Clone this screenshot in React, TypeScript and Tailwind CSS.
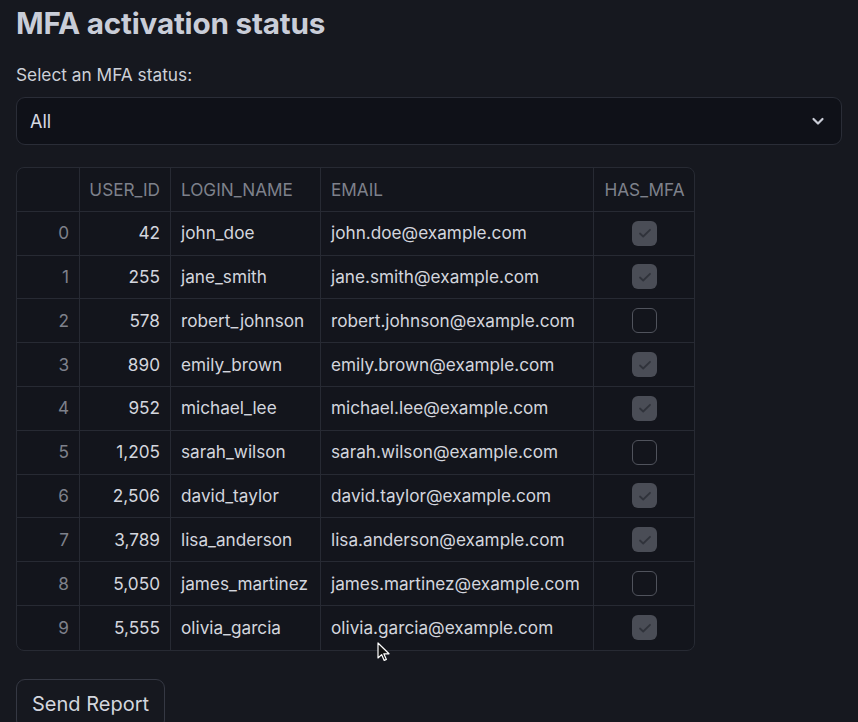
import React from "react";

type Row = {
  id: number;
  login: string;
  email: string;
  mfa: boolean;
};

const rows: Row[] = [
  { id: 42, login: "john_doe", email: "john.doe@example.com", mfa: true },
  { id: 255, login: "jane_smith", email: "jane.smith@example.com", mfa: true },
  { id: 578, login: "robert_johnson", email: "robert.johnson@example.com", mfa: false },
  { id: 890, login: "emily_brown", email: "emily.brown@example.com", mfa: true },
  { id: 952, login: "michael_lee", email: "michael.lee@example.com", mfa: true },
  { id: 1205, login: "sarah_wilson", email: "sarah.wilson@example.com", mfa: false },
  { id: 2506, login: "david_taylor", email: "david.taylor@example.com", mfa: true },
  { id: 3789, login: "lisa_anderson", email: "lisa.anderson@example.com", mfa: true },
  { id: 5050, login: "james_martinez", email: "james.martinez@example.com", mfa: false },
  { id: 5555, login: "olivia_garcia", email: "olivia.garcia@example.com", mfa: true },
];

function CheckCell({ checked }: { checked: boolean }) {
  if (!checked) {
    return <div className="w-[25px] h-[25px] rounded-[6px] border border-[#50535c]" />;
  }
  return (
    <div className="w-[25px] h-[25px] rounded-[6px] bg-[#4a4d56] flex items-center justify-center">
      <svg width="16" height="16" viewBox="0 0 16 16" fill="none">
        <path d="M3 8.5l3.2 3L13 4.8" stroke="#30333b" strokeWidth="1.8" strokeLinecap="round" strokeLinejoin="round" />
      </svg>
    </div>
  );
}

export default function App() {
  const cell = "h-[43.8px] border-r border-b border-[#272a33] px-[10px] flex items-center";
  return (
    <div
      className="relative w-[858px] h-[722px] overflow-hidden bg-[#16181f] px-4 text-[#d3d6de]"
      style={{ fontFamily: "Inter, 'Noto Sans', sans-serif" }}
    >
      <h1 className="pt-[5px] text-[29.7px] leading-[36px] font-bold text-[#c9cdd8] tracking-[-0.2px]">
        MFA activation status
      </h1>

      <div className="mt-[23px] text-[17.3px] leading-[22px] text-[#cdd0d8]">Select an MFA status:</div>

      <div className="mt-[11px] h-[48px] rounded-[9px] border border-[#2a2d37] bg-[#0f1118] flex items-center justify-between pl-[13px] pr-[16px]">
        <span className="text-[18px] text-[#d7dae2]">All</span>
        <svg width="14" height="14" viewBox="0 0 14 14" fill="none">
          <path d="M2.5 5l4.5 4.5L11.5 5" stroke="#c9ccd6" strokeWidth="2.2" strokeLinecap="round" strokeLinejoin="round" />
        </svg>
      </div>

      <div className="mt-[22px] w-[679px] rounded-[8px] border border-[#272a33] bg-[#13151c] overflow-hidden text-[17.2px]">
        <div className="grid grid-cols-[63px_91px_150px_273px_101px]">
          <div className={cell} />
          <div className={`${cell} justify-end text-[#7e818b]`}>USER_ID</div>
          <div className={`${cell} text-[#7e818b]`}>LOGIN_NAME</div>
          <div className={`${cell} text-[#7e818b]`}>EMAIL</div>
          <div className={`${cell} border-r-0 justify-center text-[#7e818b]`}>HAS_MFA</div>
          {rows.map((r, i) => {
            const last = i === rows.length - 1 ? " border-b-0" : "";
            return (
              <React.Fragment key={r.id}>
                <div className={`${cell}${last} justify-end text-[#7e818b]`}>{i}</div>
                <div className={`${cell}${last} justify-end`}>{r.id.toLocaleString("en-US")}</div>
                <div className={`${cell}${last}`}>{r.login}</div>
                <div className={`${cell}${last}`}>{r.email}</div>
                <div className={`${cell}${last} border-r-0 justify-center`}>
                  <CheckCell checked={r.mfa} />
                </div>
              </React.Fragment>
            );
          })}
        </div>
      </div>

      <button className="mt-[28px] h-[50px] px-[15px] rounded-[9px] border border-[#353843] bg-[#16181f] text-[20px] text-[#d3d6de]">
        Send Report
      </button>

      <svg className="absolute left-[377px] top-[642px]" width="14" height="20" viewBox="0 0 14 20">
        <path d="M1 1v15l3.6-3.4 2.6 5.8 2.2-1-2.6-5.6H12L1 1z" fill="#111" stroke="#fff" strokeWidth="1.2" strokeLinejoin="round" />
      </svg>
    </div>
  );
}
